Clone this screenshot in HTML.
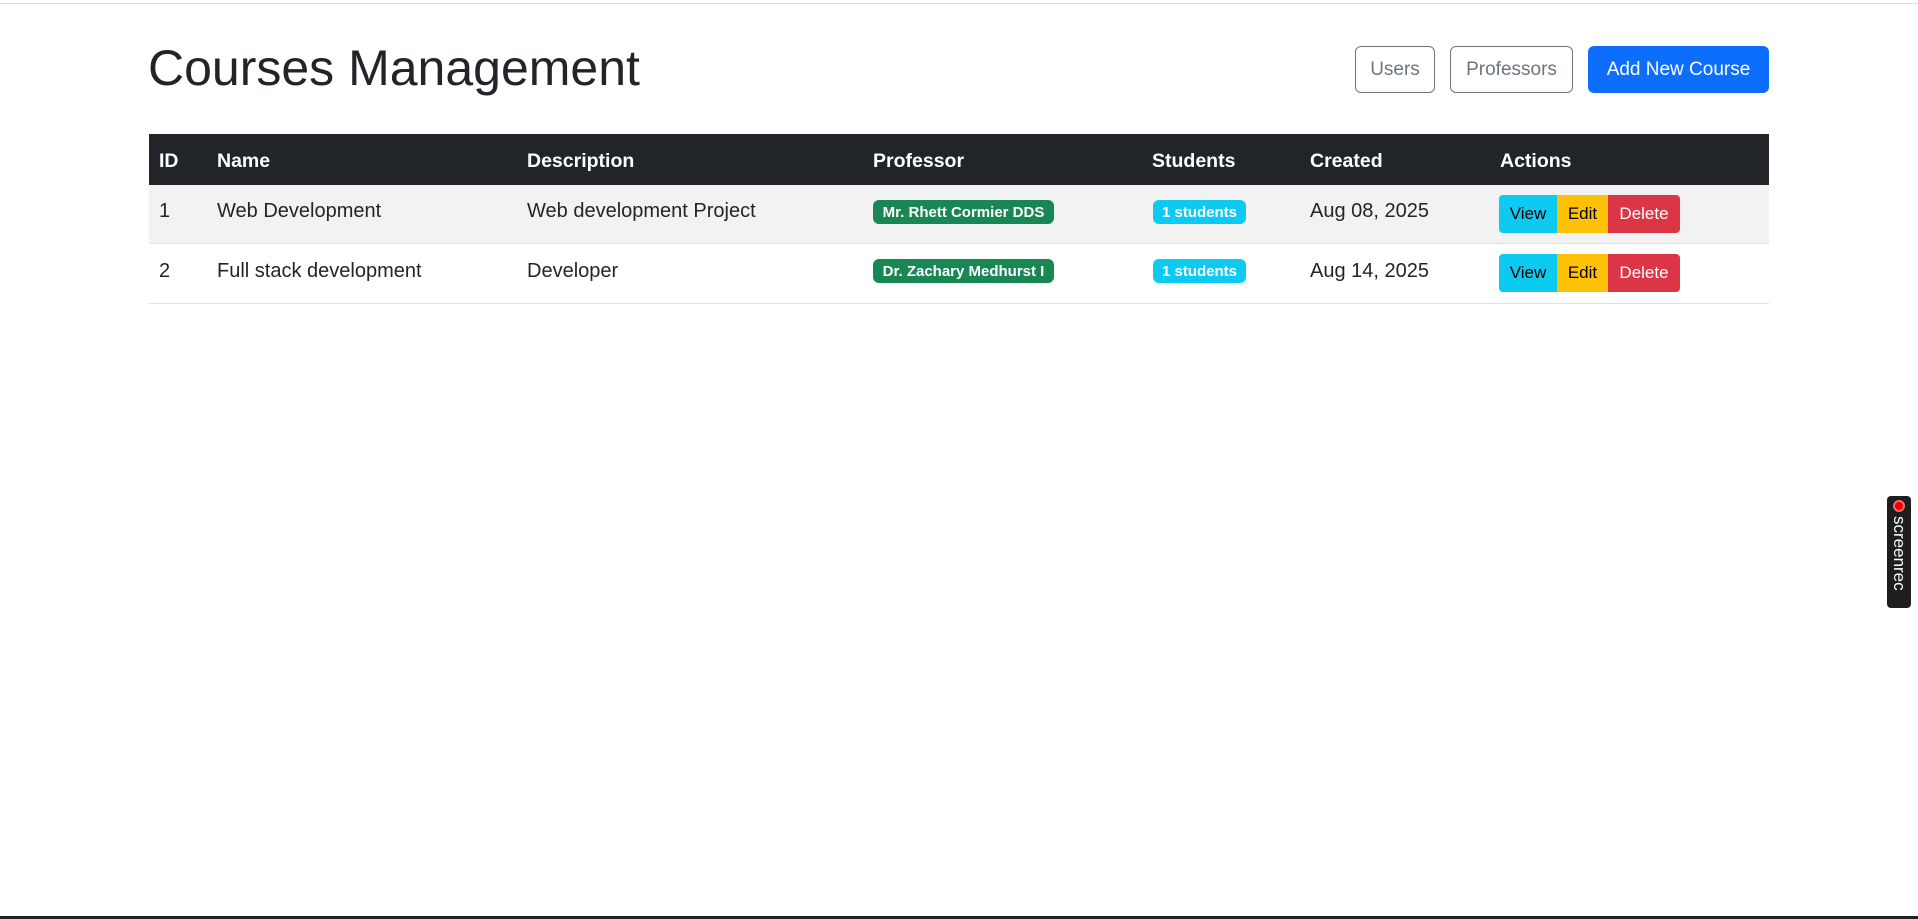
<!DOCTYPE html>
<html><head><meta charset="utf-8"><style>
*{box-sizing:border-box;margin:0;padding:0}
body{width:1918px;height:919px;background:#fff;position:relative;overflow:hidden;font-family:"Liberation Sans",sans-serif;color:#212529}
.a{position:absolute}
.t{font-size:20px;white-space:nowrap}
.h{font-size:19.5px;font-weight:bold;color:#fff;white-space:nowrap}
.btn{position:absolute;display:flex;align-items:center;justify-content:center;font-size:19px;border-radius:6px}
.badge{position:absolute;display:flex;align-items:center;justify-content:center;font-size:15px;font-weight:bold;color:#fff;border-radius:6px;height:24px}
.ab{position:absolute;display:flex;align-items:center;justify-content:center;font-size:17px;height:38px}
</style></head><body>
<div class="a" style="left:0;top:3px;width:1918px;height:1px;background:#ddd"></div>
<div class="a" style="left:148px;top:38px;font-size:50px;line-height:60px;color:#212529">Courses Management</div>
<div class="btn" style="left:1355px;top:46px;width:80px;height:47px;border:1px solid #6c757d;color:#6c757d">Users</div>
<div class="btn" style="left:1450px;top:46px;width:123px;height:47px;border:1px solid #6c757d;color:#6c757d">Professors</div>
<div class="btn" style="left:1588px;top:46px;width:181px;height:47px;background:#0d6efd;color:#fff">Add New Course</div>

<div class="a" style="left:149px;top:134px;width:1620px;height:51px;background:#212529"></div>
<div class="a" style="left:149px;top:185px;width:1620px;height:59px;background:#f2f2f2"></div>
<div class="a" style="left:149px;top:243px;width:1620px;height:1px;background:#dee2e6"></div>
<div class="a" style="left:149px;top:303px;width:1620px;height:1px;background:#dee2e6"></div>

<div class="a h" style="left:159px;top:150px">ID</div>
<div class="a h" style="left:217px;top:150px">Name</div>
<div class="a h" style="left:527px;top:150px">Description</div>
<div class="a h" style="left:873px;top:150px">Professor</div>
<div class="a h" style="left:1152px;top:150px">Students</div>
<div class="a h" style="left:1310px;top:150px">Created</div>
<div class="a h" style="left:1500px;top:150px">Actions</div>

<div class="a t" style="left:159px;top:200px">1</div>
<div class="a t" style="left:217px;top:200px">Web Development</div>
<div class="a t" style="left:527px;top:200px">Web development Project</div>
<div class="badge" style="left:873px;top:200px;width:181px;background:#198754">Mr. Rhett Cormier DDS</div>
<div class="badge" style="left:1153px;top:200px;width:93px;background:#0dcaf0">1 students</div>
<div class="a t" style="left:1310px;top:200px">Aug 08, 2025</div>
<div class="ab" style="left:1499px;top:195px;width:58px;background:#0dcaf0;border-radius:4px 0 0 4px;color:#000">View</div>
<div class="ab" style="left:1557px;top:195px;width:51px;background:#ffc107;color:#000">Edit</div>
<div class="ab" style="left:1608px;top:195px;width:72px;background:#dc3545;border-radius:0 4px 4px 0;color:#fff">Delete</div>

<div class="a t" style="left:159px;top:260px">2</div>
<div class="a t" style="left:217px;top:260px">Full stack development</div>
<div class="a t" style="left:527px;top:260px">Developer</div>
<div class="badge" style="left:873px;top:259px;width:181px;background:#198754">Dr. Zachary Medhurst I</div>
<div class="badge" style="left:1153px;top:259px;width:93px;background:#0dcaf0">1 students</div>
<div class="a t" style="left:1310px;top:260px">Aug 14, 2025</div>
<div class="ab" style="left:1499px;top:254px;width:58px;background:#0dcaf0;border-radius:4px 0 0 4px;color:#000">View</div>
<div class="ab" style="left:1557px;top:254px;width:51px;background:#ffc107;color:#000">Edit</div>
<div class="ab" style="left:1608px;top:254px;width:72px;background:#dc3545;border-radius:0 4px 4px 0;color:#fff">Delete</div>

<div class="a" style="left:1887px;top:496px;width:24px;height:112px;background:#1e1e1e;border-radius:4px"></div>
<div class="a" style="left:1893px;top:500px;width:12px;height:12px;border-radius:50%;background:#e00;border:2px solid #f66"></div>
<div class="a" style="left:1899px;top:516px;transform-origin:0 0;transform:rotate(90deg) translateY(-8px);color:#fff;font-size:17px;white-space:nowrap;line-height:16px">screenrec</div>

<div class="a" style="left:0;top:916px;width:1918px;height:3px;background:#222"></div>
</body></html>
